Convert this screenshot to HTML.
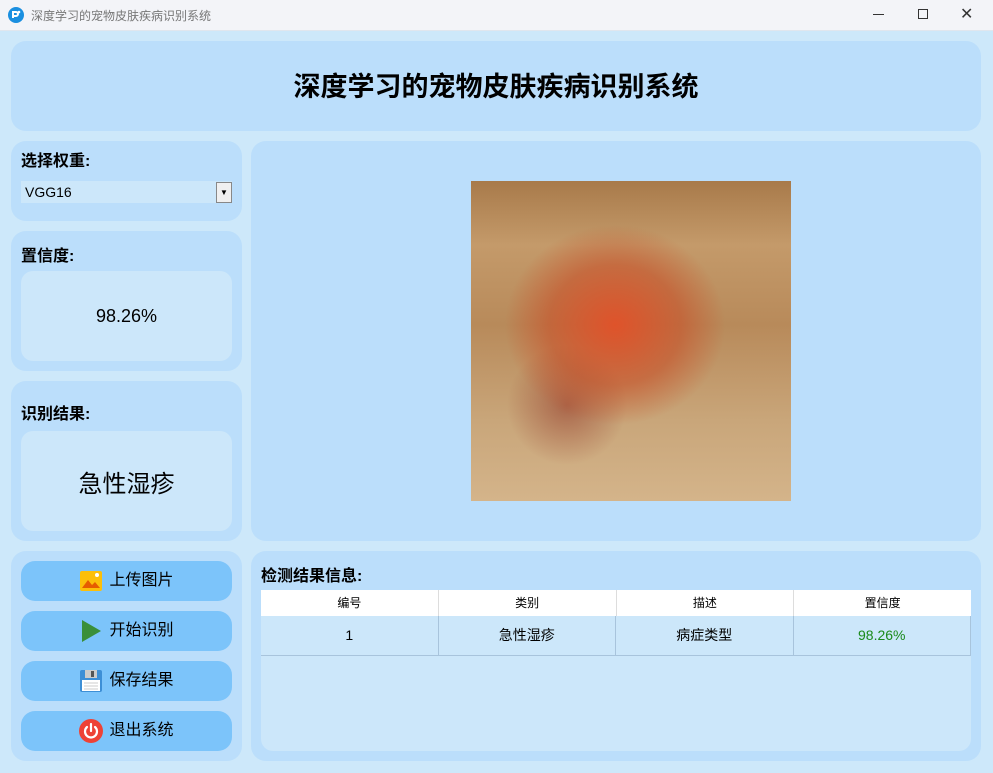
<!DOCTYPE html>
<html><head><meta charset="utf-8"><style>
*{margin:0;padding:0;box-sizing:border-box}
body{width:993px;height:773px;overflow:hidden;background:#cde8fa;font-family:"Liberation Sans","Noto Sans CJK SC",sans-serif;position:relative;color:#000}
.a{position:absolute}
.p{position:absolute;background:#bbdefb;border-radius:15px}
.in{position:absolute;background:#cce7fa;border-radius:12px;display:flex;align-items:center;justify-content:center}
.lbl{position:absolute;font-weight:bold;font-size:16px}
.btn{position:absolute;left:21px;width:211px;height:40px;background:#7cc4fa;border-radius:14px;display:flex;align-items:center;justify-content:center;font-size:16px;gap:6px;line-height:1}
.btn svg{width:24px;height:24px}
</style></head><body>
<div class="a" style="left:0;top:0;width:993px;height:31px;background:#f3f4f8;border-bottom:1px solid #e0e6ee"></div>
<svg class="a" style="left:8px;top:7px" width="16" height="16" viewBox="0 0 16 16"><circle cx="8" cy="8" r="8" fill="#1a8fe0"/><path d="M5 11V5h3a2 2 0 010 4H6" fill="none" stroke="#fff" stroke-width="2"/><circle cx="11" cy="5" r="1.3" fill="#fff"/></svg>
<div class="a" style="left:31px;top:7px;font-size:12px;color:#777">深度学习的宠物皮肤疾病识别系统</div>
<div class="a" style="left:873px;top:14px;width:11px;height:1px;background:#333"></div>
<div class="a" style="left:918px;top:9px;width:10px;height:10px;border:1px solid #333"></div>
<div class="a" style="left:960px;top:4px;font-size:16px;color:#333">✕</div>

<div class="p" style="left:11px;top:41px;width:970px;height:90px;display:flex;align-items:center;justify-content:center;font-size:27px;font-weight:bold;padding-bottom:4px">深度学习的宠物皮肤疾病识别系统</div>

<div class="p" style="left:11px;top:141px;width:231px;height:80px"></div>
<div class="lbl" style="left:21px;top:147px">选择权重:</div>
<div class="a" style="left:21px;top:181px;width:211px;height:22px;background:#cce7fa;font-size:14px;padding:3px 0 0 4px">VGG16</div>
<div class="a" style="left:216px;top:182px;width:16px;height:21px;background:#f0f0f0;border:1px solid #888;font-size:8px;text-align:center;line-height:19px">▼</div>

<div class="p" style="left:11px;top:231px;width:231px;height:140px"></div>
<div class="lbl" style="left:21px;top:242px">置信度:</div>
<div class="in" style="left:21px;top:271px;width:211px;height:90px;font-size:18px">98.26%</div>

<div class="p" style="left:11px;top:381px;width:231px;height:160px"></div>
<div class="lbl" style="left:21px;top:400px">识别结果:</div>
<div class="in" style="left:21px;top:431px;width:211px;height:100px;font-size:24px">急性湿疹</div>

<div class="p" style="left:11px;top:551px;width:231px;height:210px"></div>
<div class="btn" style="top:561px"><svg viewBox="0 0 24 24"><rect x="1" y="2" width="22" height="20" rx="2" fill="#fcbf0a"/><path d="M3 19l6-8 4 5 3-3 5 6z" fill="#e65c00"/><circle cx="18" cy="6" r="2" fill="#fff"/></svg>上传图片</div>
<div class="btn" style="top:611px"><svg viewBox="0 0 24 24"><path d="M3 1l19 11-19 11z" fill="#3a8f3a"/></svg>开始识别</div>
<div class="btn" style="top:661px"><svg viewBox="0 0 24 24"><rect x="1" y="1" width="22" height="22" rx="2" fill="#3d8fd6"/><rect x="6" y="1" width="12" height="8" fill="#ccc"/><rect x="12" y="2" width="3" height="6" fill="#555"/><rect x="3" y="11" width="18" height="11" fill="#fff"/><path d="M5 14h14M5 17h14M5 20h14" stroke="#ccc"/></svg>保存结果</div>
<div class="btn" style="top:711px"><svg viewBox="0 0 24 24"><circle cx="12" cy="12" r="12" fill="#ee4236"/><path d="M8 8a6 6 0 108 0" fill="none" stroke="#fff" stroke-width="2.2" stroke-linecap="round"/><path d="M12 5v7" stroke="#fff" stroke-width="2.2" stroke-linecap="round"/></svg>退出系统</div>

<div class="p" style="left:251px;top:141px;width:730px;height:400px"></div>
<div class="a" style="left:471px;top:181px;width:320px;height:320px;overflow:hidden;background:
radial-gradient(ellipse 110px 100px at 45% 45%,rgba(225,80,40,.95),rgba(200,80,40,.6) 60%,rgba(0,0,0,0) 100%),
radial-gradient(ellipse 60px 60px at 30% 70%,rgba(140,40,30,.5),rgba(0,0,0,0)),
linear-gradient(180deg,#a87a4a 0%,#c49a6a 20%,#b88a5a 45%,#c9a67a 75%,#d4b48a 100%)"></div>

<div class="p" style="left:251px;top:551px;width:730px;height:210px"></div>
<div class="lbl" style="left:261px;top:562px">检测结果信息:</div>
<div class="a" style="left:261px;top:590px;width:710px;height:161px;background:#cce7fa;border-radius:0 0 12px 12px"></div>
<div class="a" style="left:261px;top:590px;width:710px;height:66px;font-size:12px">
<div style="display:flex;height:26px;background:#fff">
<div style="flex:1;text-align:center;line-height:26px;border-right:1px solid #ddd">编号</div><div style="flex:1;text-align:center;line-height:26px;border-right:1px solid #ddd">类别</div><div style="flex:1;text-align:center;line-height:26px;border-right:1px solid #ddd">描述</div><div style="flex:1;text-align:center;line-height:26px">置信度</div></div>
<div style="display:flex;height:40px;border-bottom:1px solid #a8c4dc;font-size:14px">
<div style="flex:1;text-align:center;line-height:39px;border-right:1px solid #a8c4dc">1</div><div style="flex:1;text-align:center;line-height:39px;border-right:1px solid #a8c4dc">急性湿疹</div><div style="flex:1;text-align:center;line-height:39px;border-right:1px solid #a8c4dc">病症类型</div><div style="flex:1;text-align:center;line-height:39px;color:#1a8a1a;border-right:1px solid #a8c4dc">98.26%</div></div>
</div>
</body></html>
